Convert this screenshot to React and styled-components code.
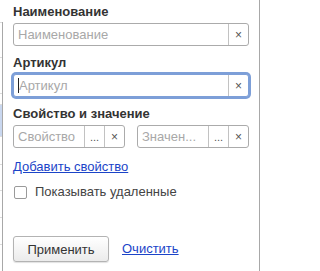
import React from "react";
import styled, { createGlobalStyle } from "styled-components";

const GlobalStyle = createGlobalStyle`
  html, body {
    margin: 0;
    padding: 0;
    background: #fff;
  }
  body {
    font-family: "Liberation Sans", Arial, sans-serif;
    font-size: 13px;
    color: #333;
  }
`;

const Page = styled.div`
  width: 260px;
  height: 271px;
  display: flex;
  overflow: hidden;
  background: #fff;
`;

const Behind = styled.div`
  width: 2px;
  margin-top: 22px;
  border-right: 1px solid #a8a8a8;
  display: flex;
  flex-direction: column;
`;

const BehindRow = styled.div`
  height: ${(p) => p.h}px;
  border-top: 1px solid #dcdcdc;
  background: ${(p) => (p.selected ? "#c9d7ef" : "transparent")};
`;

const Panel = styled.div`
  flex: 1;
  border-right: 1px solid #a8a8a8;
  padding: 4px 10px 0 10px;
  display: flex;
  flex-direction: column;
`;

const Group = styled.div`
  display: flex;
  flex-direction: column;
  gap: 3px;
  & + & {
    margin-top: 9px;
  }
`;

const Label = styled.div`
  font-weight: bold;
  line-height: 16px;
  color: #333;
`;

const Field = styled.div`
  height: 23px;
  box-sizing: border-box;
  display: flex;
  flex: ${(p) => (p.half ? "1 1 0" : "none")};
  border: 1px solid ${(p) => (p.focused ? "#7d9fd8" : "#ababab")};
  border-radius: 3px;
  box-shadow: ${(p) => (p.focused ? "0 0 0 2px #7d9fd8" : "none")};
  background: #fff;
  min-width: 0;
`;

const FieldText = styled.div`
  flex: 1;
  min-width: 0;
  display: flex;
  align-items: center;
  padding-left: 4px;
  color: #a8a8a8;
  white-space: nowrap;
  overflow: hidden;
`;

const Caret = styled.span`
  display: inline-block;
  width: 1px;
  height: 15px;
  background: #222;
`;

const FieldButton = styled.div`
  width: 20px;
  flex: none;
  display: flex;
  align-items: ${(p) => (p.dots ? "flex-end" : "center")};
  justify-content: center;
  border-left: 1px solid #c2c2c2;
  color: #555;
  font-size: ${(p) => (p.dots ? "11px" : "12px")};
  line-height: ${(p) => (p.dots ? "16px" : "12px")};
  padding-bottom: ${(p) => (p.dots ? "2px" : "0")};
  box-sizing: border-box;
`;

const PairRow = styled.div`
  display: flex;
  gap: 12px;
`;

const Link = styled.a`
  color: #1b44c8;
  text-decoration: underline;
  line-height: 16px;
  cursor: pointer;
`;

const AddLink = styled(Link)`
  margin-top: 11px;
  align-self: flex-start;
`;

const CheckRow = styled.label`
  margin-top: 9px;
  display: flex;
  align-items: center;
  gap: 8px;
  line-height: 16px;
  color: #444;
  padding-left: 1px;
`;

const CheckBox = styled.span`
  width: 13px;
  height: 13px;
  box-sizing: border-box;
  border: 1px solid #9a9a9a;
  border-radius: 2px;
  background: #fff;
`;

const Footer = styled.div`
  margin-top: 36px;
  display: flex;
  align-items: center;
  gap: 13px;
`;

const ApplyButton = styled.button`
  width: 96px;
  height: 26px;
  border: 1px solid #b3b3b3;
  border-radius: 3px;
  background: linear-gradient(#ffffff, #ebebeb);
  box-shadow: 0 1px 1px rgba(0, 0, 0, 0.12);
  font-family: inherit;
  font-size: 13px;
  color: #333;
  padding: 0;
`;

const ClearField = ({ placeholder, focused }) => (
  <Field focused={focused}>
    <FieldText>
      {focused && <Caret />}
      {placeholder}
    </FieldText>
    <FieldButton>×</FieldButton>
  </Field>
);

const ChoiceField = ({ placeholder }) => (
  <Field half>
    <FieldText>{placeholder}</FieldText>
    <FieldButton dots>...</FieldButton>
    <FieldButton>×</FieldButton>
  </Field>
);

const behindRows = [38, 39, 12, 34, 30, 29, 29, 29, 29];

export default function App() {
  return (
    <>
      <GlobalStyle />
      <Page>
        <Behind>
          {behindRows.map((h, i) => (
            <BehindRow key={i} h={h} selected={i === 3} />
          ))}
        </Behind>
        <Panel>
          <Group>
            <Label>Наименование</Label>
            <ClearField placeholder="Наименование" />
          </Group>
          <Group>
            <Label>Артикул</Label>
            <ClearField placeholder="Артикул" focused />
          </Group>
          <Group>
            <Label>Свойство и значение</Label>
            <PairRow>
              <ChoiceField placeholder="Свойство" />
              <ChoiceField placeholder="Значен..." />
            </PairRow>
          </Group>
          <AddLink>Добавить свойство</AddLink>
          <CheckRow>
            <CheckBox />
            Показывать удаленные
          </CheckRow>
          <Footer>
            <ApplyButton>Применить</ApplyButton>
            <Link>Очистить</Link>
          </Footer>
        </Panel>
      </Page>
    </>
  );
}
